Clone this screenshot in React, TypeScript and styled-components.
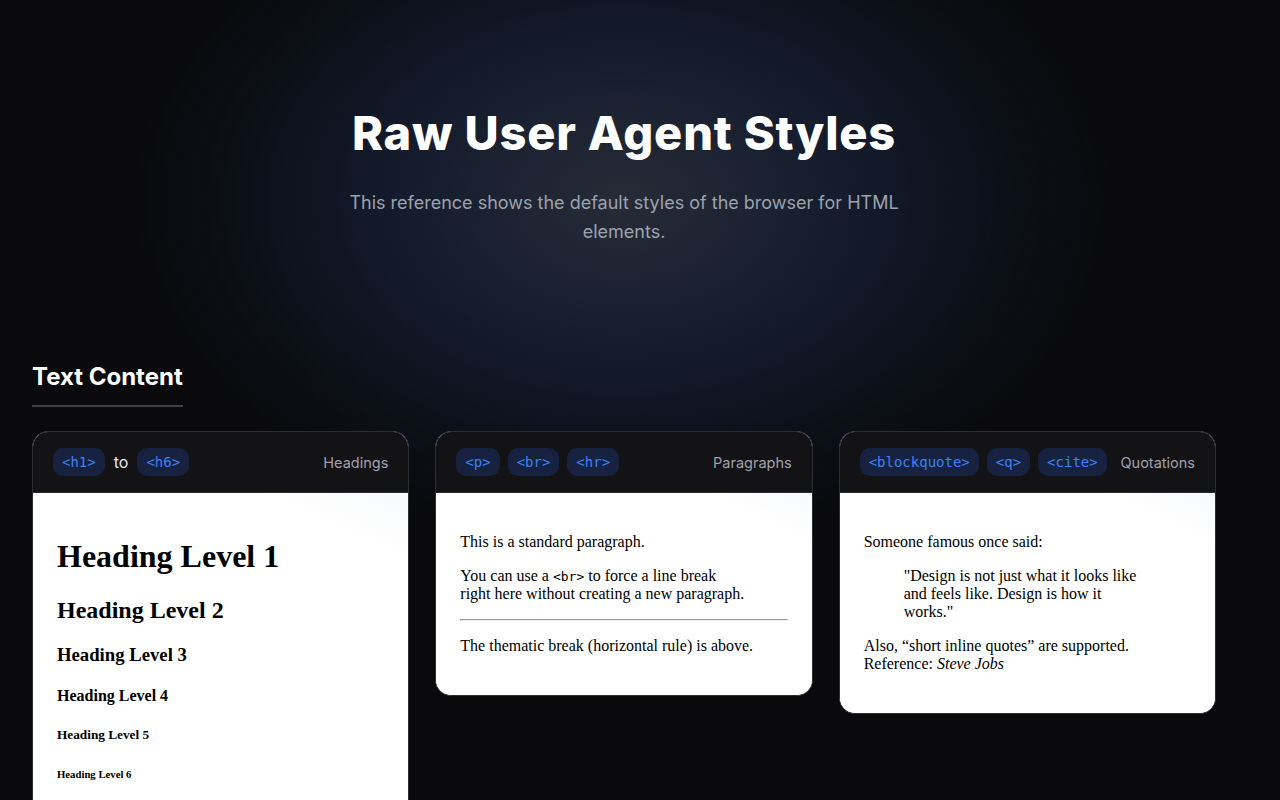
import React from 'react';
import styled, { createGlobalStyle } from 'styled-components';

const GlobalStyle = createGlobalStyle`
  html, body {
    margin: 0;
    padding: 0;
    background: #0a0a0c;
  }
  body {
    font-family: Inter, "Noto Sans", sans-serif;
    color: #fff;
  }
`;

const Page = styled.div`
  width: 1248px;
  min-height: 800px;
  background:
    radial-gradient(ellipse 490px 340px at 624px 200px, #262b37 0%, #141c2d 45%, #0d121d 70%, rgba(10, 10, 12, 0) 100%),
    #0a0a0c;
`;

const Hero = styled.header`
  padding: 104px 0 0;
  height: 256px;
  text-align: center;
  display: flex;
  flex-direction: column;
  align-items: center;
`;

const Title = styled.h1`
  margin: 0;
  font-family: Inter, sans-serif;
  font-weight: 800;
  font-size: 47px;
  line-height: 58px;
  letter-spacing: 0.8px;
  color: #fff;
`;

const Subtitle = styled.p`
  margin: 26px 0 0;
  max-width: 560px;
  font-size: 18px;
  line-height: 29px;
  color: #9ca3af;
`;

const Section = styled.section`
  padding: 0 32px;
`;

const SectionTitle = styled.h2`
  display: inline-block;
  margin: 0 0 24px;
  padding-bottom: 12px;
  font-size: 24px;
  line-height: 33px;
  font-weight: 700;
  color: #fff;
  border-bottom: 2px solid #3f3f46;
`;

const Grid = styled.div`
  width: 1184px;
  display: grid;
  grid-template-columns: repeat(3, 1fr);
  gap: 26px;
  align-items: start;
`;

const Card = styled.article`
  border: 1px solid #2c2c33;
  border-radius: 16px;
  overflow: hidden;
  background: #fff;
`;

const CardHeader = styled.div`
  height: 60px;
  padding: 0 20px;
  display: flex;
  align-items: center;
  gap: 8px;
  background: #131316;
  border-bottom: 1px solid #2a2a31;
`;

const Tag = styled.code`
  display: inline-flex;
  align-items: center;
  height: 28px;
  padding: 0 9px;
  border-radius: 10px;
  background: #172240;
  color: #3b82f6;
  font-family: "DejaVu Sans Mono", monospace;
  font-size: 14px;
`;

const Joiner = styled.span`
  margin: 0 1px;
  color: #e5e7eb;
  font-size: 16px;
`;

const Label = styled.span`
  margin-left: auto;
  color: #a1a1aa;
  font-size: 14.5px;
`;

const CardBody = styled.div`
  padding: 24px;
  color: #000;
  font-family: "Liberation Serif", "Times New Roman", serif;
  font-size: 16px;
  background: linear-gradient(205deg, #f8f9fb 0%, #ffffff 14%);
  code {
    font-family: "DejaVu Sans Mono", monospace;
    font-size: 13px;
  }
  hr {
    margin: 8px 0;
  }
  blockquote {
    margin: 16px 40px;
  }
`;

const Headings = styled.div`
  h1, h2, h3, h4, h5, h6 { font-weight: bold; }
`;

const App: React.FC = () => {
  return (
    <Page>
      <GlobalStyle />
      <Hero>
        <Title>Raw User Agent Styles</Title>
        <Subtitle>This reference shows the default styles of the browser for HTML elements.</Subtitle>
      </Hero>
      <Section>
        <SectionTitle>Text Content</SectionTitle>
        <Grid>
          <Card>
            <CardHeader>
              <Tag>&lt;h1&gt;</Tag>
              <Joiner>to</Joiner>
              <Tag>&lt;h6&gt;</Tag>
              <Label>Headings</Label>
            </CardHeader>
            <CardBody>
              <Headings>
                <h1>Heading Level 1</h1>
                <h2>Heading Level 2</h2>
                <h3>Heading Level 3</h3>
                <h4>Heading Level 4</h4>
                <h5>Heading Level 5</h5>
                <h6>Heading Level 6</h6>
              </Headings>
            </CardBody>
          </Card>
          <Card>
            <CardHeader>
              <Tag>&lt;p&gt;</Tag>
              <Tag>&lt;br&gt;</Tag>
              <Tag>&lt;hr&gt;</Tag>
              <Label>Paragraphs</Label>
            </CardHeader>
            <CardBody>
              <p>This is a standard paragraph.</p>
              <p>
                You can use a <code>&lt;br&gt;</code> to force a line break
                <br />
                right here without creating a new paragraph.
              </p>
              <hr />
              <p>The thematic break (horizontal rule) is above.</p>
            </CardBody>
          </Card>
          <Card>
            <CardHeader>
              <Tag>&lt;blockquote&gt;</Tag>
              <Tag>&lt;q&gt;</Tag>
              <Tag>&lt;cite&gt;</Tag>
              <Label>Quotations</Label>
            </CardHeader>
            <CardBody>
              <p>Someone famous once said:</p>
              <blockquote>"Design is not just what it looks like and feels like. Design is how it works."</blockquote>
              <p>
                Also, <q>short inline quotes</q> are supported.
                <br />
                Reference: <cite>Steve Jobs</cite>
              </p>
            </CardBody>
          </Card>
        </Grid>
      </Section>
    </Page>
  );
};

export default App;
